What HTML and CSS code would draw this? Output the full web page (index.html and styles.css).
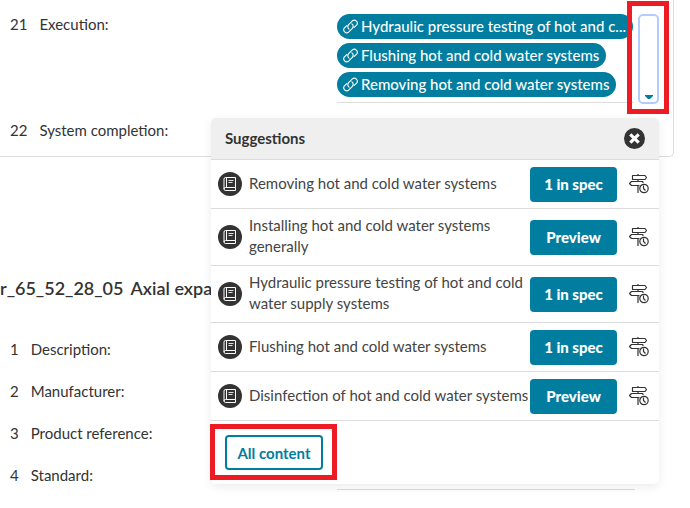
FILE: index.html
```html
<!DOCTYPE html>
<html lang="en">
<head>
<meta charset="utf-8">
<title>Specification</title>
<link rel="stylesheet" href="styles.css">
</head>
<body>
<svg class="sprite" aria-hidden="true">
  <symbol id="link" viewBox="0 0 16 16">
    <g fill="none" stroke="currentColor" stroke-width="1.2" stroke-linecap="round">
      <path d="M6.500 10.800a3.200 3.200 0 0 1-.5-4.800l4-4a3.200 3.200 0 0 1 4.500 4.500l-2.500 2.500"/>
      <path d="M9.500 5.200a3.200 3.200 0 0 1 .5 4.800l-4 4a3.200 3.200 0 0 1-4.500-4.500L4 7"/>
    </g>
  </symbol>
  <symbol id="book" viewBox="0 0 24 24">
    <circle cx="12" cy="12" r="12" fill="#333"/>
    <g fill="none" stroke="#fff">
      <path d="M17.5 15.5v-10h-10a1.5 1.5 0 0 0-1.500 1.500v10a1.500 1.500 0 0 0 1.500 1.500h10v-3h-10a1.500 1.500 0 0 0-1.500 1.500M8.500 5.500v10"/>
      <path d="M10.500 8.500h5M10.500 10.500h4" stroke-opacity=".85"/>
    </g>
  </symbol>
  <symbol id="signpost" viewBox="0 0 20 20">
    <g fill="none" stroke="#333" stroke-width="1.200" stroke-linejoin="round">
      <path d="M9 0v1.500M9 5.500v2M9 11.500V19"/>
      <path d="M3.500 1.500h12.500l1.500 2-1.500 2H3.500z"/>
      <path d="M14 7.500H2.500l-2 2 2 2h8M14 7.500v1.500"/>
      <circle cx="15" cy="14.500" r="4.200"/>
      <path d="M14.500 11.500v3l2 2"/>
    </g>
  </symbol>
</svg>

<section class="card">
  <div class="row">
    <div class="name"><span>21</span><span>Execution:</span></div>
    <div class="value chips">
      <a class="chip" href="#"><svg><use href="#link"/></svg>Hydraulic pressure testing of hot and c...</a>
      <a class="chip" href="#"><svg><use href="#link"/></svg>Flushing hot and cold water systems</a>
      <a class="chip" href="#"><svg><use href="#link"/></svg>Removing hot and cold water systems</a>
    </div>
    <div class="picker">
      <button class="toggle" type="button" aria-label="Show suggestions"><svg viewBox="0 0 8 5"><path d="M0 0h8v1L5 4H3L0 1z" fill="#007d9f"/></svg></button>
      <div class="popup">
        <header class="popup-head">
          <h2>Suggestions</h2>
          <button class="close" type="button" aria-label="Close"><svg viewBox="0 0 20 20"><circle cx="10" cy="10" r="10" fill="#333"/><path d="M6 6l8 8M14 6l-8 8" stroke="#fff" stroke-width="3"/></svg></button>
        </header>
        <ul class="items">
          <li><svg class="book"><use href="#book"/></svg><span>Removing hot and cold water systems</span><button class="solid" type="button">1 in spec</button><svg class="sign"><use href="#signpost"/></svg></li>
          <li><svg class="book"><use href="#book"/></svg><span>Installing hot and cold water systems generally</span><button class="solid" type="button">Preview</button><svg class="sign"><use href="#signpost"/></svg></li>
          <li><svg class="book"><use href="#book"/></svg><span>Hydraulic pressure testing of hot and cold water supply systems</span><button class="solid" type="button">1 in spec</button><svg class="sign"><use href="#signpost"/></svg></li>
          <li><svg class="book"><use href="#book"/></svg><span>Flushing hot and cold water systems</span><button class="solid" type="button">1 in spec</button><svg class="sign"><use href="#signpost"/></svg></li>
          <li><svg class="book"><use href="#book"/></svg><span>Disinfection of hot and cold water systems</span><button class="solid" type="button">Preview</button><svg class="sign"><use href="#signpost"/></svg></li>
        </ul>
        <footer class="popup-foot">
          <div class="marked"><button class="outline" type="button">All content</button><i class="mark mark-all"></i></div>
        </footer>
      </div>
      <i class="mark mark-toggle"></i>
    </div>
  </div>
  <div class="row">
    <label class="name" for="f22"><span>22</span><span>System completion:</span></label>
    <input class="value" id="f22" type="text">
  </div>
</section>

<section class="product">
  <h1><span>r_65_52_28_05</span><span>Axial expa</span></h1>
  <div class="row">
    <label class="name" for="f1"><span>1</span><span>Description:</span></label>
    <input class="value" id="f1" type="text">
  </div>
  <div class="row">
    <label class="name" for="f2"><span>2</span><span>Manufacturer:</span></label>
    <input class="value" id="f2" type="text">
  </div>
  <div class="row">
    <label class="name" for="f3"><span>3</span><span>Product reference:</span></label>
    <input class="value" id="f3" type="text">
  </div>
  <div class="row">
    <label class="name" for="f4"><span>4</span><span>Standard:</span></label>
    <input class="value" id="f4" type="text">
  </div>
</section>
</body>
</html>
```
FILE: styles.css
```css
* { box-sizing: border-box; }

body {
  margin: 0;
  background: #fff;
  color: #333;
  font: 15px/20px Lato, "Noto Sans", sans-serif;
}

button, input { font: inherit; }
button { padding: 0; cursor: pointer; }
svg { display: block; flex: none; }
.sprite { position: absolute; width: 0; height: 0; }

.card {
  margin-right: 16px;
  padding: 0 14px 4px 0;
  border: solid #dcdcdc;
  border-width: 0 1px 1px 0;
  border-bottom-right-radius: 5px;
}

.product { padding-right: 15px; }

.row {
  display: grid;
  grid-template-columns: 337px 1fr 21px;
  min-height: 42px;
}
.product .row { margin-right: 15px; }

.name {
  display: flex;
  gap: 12px;
  padding: 10px 0 0 10px;
}

.value {
  min-width: 0;
  margin: 0 4px 7px 0;
  padding: 0;
  border: 0;
  border-bottom: 1px solid #dcdcdc;
  background: none;
}

.card .row:first-child .name { padding-top: 14px; }

.chips {
  display: flex;
  flex-direction: column;
  align-items: flex-start;
  gap: 4px;
  padding: 14px 0 5px;
}

.chip {
  display: flex;
  gap: 3px;
  max-width: 100%;
  height: 25px;
  padding: 1px 7px 0 6px;
  border-radius: 13px;
  background: #007d9f;
  color: #fff;
  font-weight: 500;
  line-height: 22px;
  text-decoration: none;
  white-space: nowrap;
}
.chip svg { width: 15px; height: 15px; margin-top: 4px; }

.picker {
  position: relative;
  padding: 14px 0 6px;
}

.toggle {
  display: flex;
  align-items: flex-end;
  justify-content: center;
  width: 21px;
  height: 90px;
  padding-bottom: 2px;
  border: 2px solid #b3ccff;
  border-radius: 5px;
  background: #fff;
}
.toggle svg { width: 8px; height: 5px; }

.popup {
  position: absolute;
  top: 118px;
  right: 0;
  width: 448px;
  border-radius: 5px;
  background: #fff;
  box-shadow: 0 3px 10px rgba(0, 0, 0, .08);
}

.popup-head {
  display: flex;
  align-items: center;
  justify-content: space-between;
  height: 42px;
  padding: 0 14px;
  border-bottom: 1px solid #dcdcdc;
  border-radius: 5px 5px 0 0;
  background: #efefef;
}
.popup-head h2 { margin: 0; padding-bottom: 2px; font-size: 15px; line-height: 20px; }

.close { border: 0; background: none; }
.close svg { width: 21px; height: 21px; }

.items { margin: 0; padding: 0; list-style: none; }
.items li {
  display: flex;
  align-items: center;
  min-height: 49px;
  padding: 6px 10px 6px 7px;
  border-bottom: 1px solid #dcdcdc;
  line-height: 21px;
}
.items span { flex: 1; margin-left: 7px; padding-bottom: 2px; color: #444; }
.book { width: 24px; height: 24px; }
.sign { width: 20px; height: 20px; margin-left: 12px; }

.solid {
  width: 87px;
  height: 35px;
  border: 0;
  border-radius: 4px;
  background: #007d9f;
  color: #fff;
  font-weight: 900;
}

.popup-foot { display: flex; padding: 14px; }
.marked { position: relative; }
.outline {
  display: block;
  width: 98px;
  height: 35px;
  border: 2px solid #007d9f;
  border-radius: 4px;
  background: #fff;
  color: #007d9f;
  font-weight: 700;
}

.mark {
  position: absolute;
  border: 5px solid #ed1c24;
  pointer-events: none;
}
.mark-toggle { top: 1px; left: -11px; width: 42px; height: 113px; }
.mark-all { inset: -11px -14px -10px -15px; }

h1 {
  display: flex;
  gap: 7px;
  margin: 119px 0 29px;
  font-size: 18px;
  line-height: 24px;
  font-weight: 600;
}
```
